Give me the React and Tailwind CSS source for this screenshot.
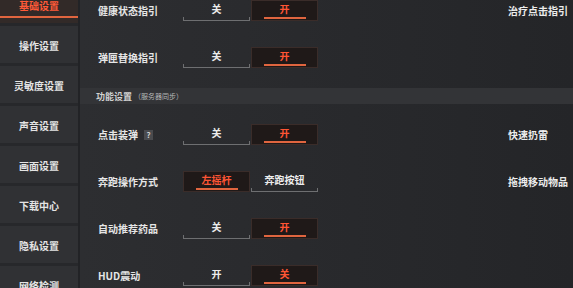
import React from 'react'

const NAV = ['基础设置', '操作设置', '灵敏度设置', '声音设置', '画面设置', '下载中心', '隐私设置', '网络检测']

// One half of a two-way switch.
function Option({ label, active }) {
  if (active) {
    return (
      <div className="w-[67px] h-[21px] flex flex-col items-center bg-[#1f1918] border border-[#3a2c29]">
        <span className="flex-1 flex items-center text-[10px] leading-none font-bold text-[#ff5534]">{label}</span>
        <div className="w-[42px] h-[2px] mb-[1px] bg-[#e0653f]" />
      </div>
    )
  }
  return (
    <div className="w-[67px] h-[21px] flex flex-col items-center">
      <span className="flex-1 flex items-center text-[10px] leading-none font-bold text-[#ececec]">{label}</span>
      <div className="w-full h-[4px] border-b border-x border-[#6e6f71]" />
    </div>
  )
}

function Row({ label, help, options, active, right }) {
  return (
    <div className="h-[47px] flex items-center pl-[18px]">
      <div className="w-[85px] flex items-center gap-[6px] text-[10px] leading-none font-bold text-[#e6e6e6]">
        {label}
        {help && (
          <span className="w-[9px] h-[10px] flex items-center justify-center bg-[#4a4b4e] text-[8px] text-[#cfcfcf]">?</span>
        )}
      </div>
      <div className="flex gap-[1px]">
        {options.map((o, i) => (
          <Option key={o} label={o} active={i === active} />
        ))}
      </div>
      {right && <span className="ml-[190px] text-[10px] leading-none font-bold text-[#ececec]">{right}</span>}
    </div>
  )
}

export default function App() {
  return (
    <div
      className="w-[573px] h-[288px] overflow-hidden flex bg-[#2a2b2e]"
      style={{ fontFamily: '"Noto Sans CJK SC", "Noto Sans", sans-serif' }}
    >
      {/* Sidebar */}
      <aside className="w-[80px] shrink-0 -mt-[14px] bg-[#2e2f32] border-r-2 border-[#222326]">
        {NAV.map((n, i) =>
          i === 0 ? (
            <div key={n} className="h-[40px] flex flex-col items-center bg-[#322a28] border-b-[3px] border-[#26272a]">
              <span className="mt-[14px] h-[12px] text-[10px] leading-[12px] font-bold text-[#ff5a38]">{n}</span>
              <div className="w-full h-[2px] mt-[4px] bg-[#e0653f]" />
            </div>
          ) : (
            <div key={n} className="h-[40px] flex justify-center bg-[#303134] border-b-[3px] border-[#27282b]">
              <span className="mt-[14px] h-[12px] text-[10px] leading-[12px] font-bold text-[#e4e4e4]">{n}</span>
            </div>
          )
        )}
      </aside>

      {/* Settings list */}
      <main className="flex-1 -mt-[13px] bg-gradient-to-r from-[#2d2e31] to-[#242528]">
        <Row label="健康状态指引" options={['关', '开']} active={1} right="治疗点击指引" />
        <Row label="弹匣替换指引" options={['关', '开']} active={1} />
        <div className="mt-[7px] mb-[7px] h-[16px] flex items-center pl-[16px] bg-[#333437]">
          <span className="text-[9px] leading-none font-bold text-[#d2d2d2]">功能设置</span>
          <span className="text-[7px] leading-none text-[#b8b8b8] ml-[2px]">（服务器同步）</span>
        </div>
        <Row label="点击装弹" help options={['关', '开']} active={1} right="快速扔雷" />
        <Row label="奔跑操作方式" options={['左摇杆', '奔跑按钮']} active={0} right="拖拽移动物品" />
        <Row label="自动推荐药品" options={['关', '开']} active={1} />
        <Row label="HUD震动" options={['开', '关']} active={1} />
      </main>
    </div>
  )
}
